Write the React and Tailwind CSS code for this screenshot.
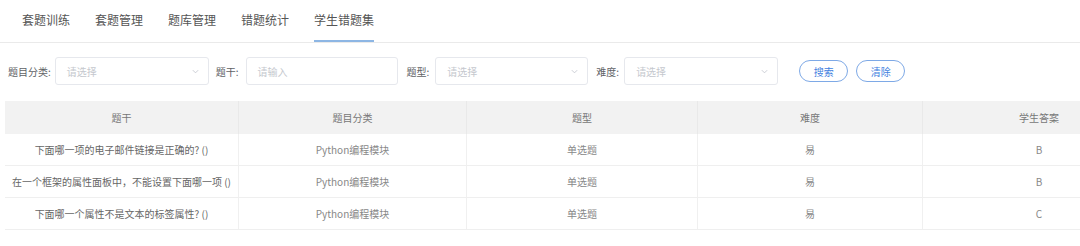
import React from 'react';

const tabs = ['套题训练', '套题管理', '题库管理', '错题统计', '学生错题集'];

const cols = ['题干', '题目分类', '题型', '难度', '学生答案'];

const rows = [
  ['下面哪一项的电子邮件链接是正确的? ()', 'Python编程模块', '单选题', '易', 'B'],
  ['在一个框架的属性面板中，不能设置下面哪一项 ()', 'Python编程模块', '单选题', '易', 'B'],
  ['下面哪一个属性不是文本的标签属性? ()', 'Python编程模块', '单选题', '易', 'C'],
];

const Chevron = () => (
  <svg width="9" height="9" viewBox="0 0 10 10" className="shrink-0">
    <path d="M2 3.5 L5 6.5 L8 3.5" fill="none" stroke="#c0c4cc" strokeWidth="0.9" />
  </svg>
);

const Select = ({ w, placeholder = '请选择', arrow = true }) => (
  <div
    className={`${w} h-[28px] border border-[#e6e8ed] rounded-[3px] bg-white flex items-center justify-between pl-[11px] pr-[8px]`}
  >
    <span className="text-[10px] text-[#c5c8ce]">{placeholder}</span>
    {arrow && <Chevron />}
  </div>
);

const Label = ({ children, className = '' }) => (
  <span className={`text-[10px] text-[#606266] whitespace-nowrap ${className}`}>{children}</span>
);

export default function App() {
  return (
    <div
      className="w-[1080px] h-[246px] overflow-hidden bg-white"
      style={{ fontFamily: '"Noto Sans CJK SC", "Noto Sans", sans-serif' }}
    >
      {/* tabs */}
      <div className="h-[43px] border-b border-[#eaeaea] flex pl-[22px] gap-[25px]">
        {tabs.map((t, i) => (
          <div
            key={t}
            className={`h-[42px] pt-[12px] text-[12px] leading-[16px] text-[#555] ${
              i === 4 ? 'border-b-2 border-[#8db6e4]' : ''
            }`}
          >
            {t}
          </div>
        ))}
      </div>

      {/* filters */}
      <div className="mt-[14px] h-[28px] flex items-center pl-[8px]">
        <Label>题目分类:</Label>
        <div className="ml-[4px]">
          <Select w="w-[154px]" />
        </div>
        <Label className="ml-[7px]">题干:</Label>
        <div className="ml-[7px]">
          <Select w="w-[152px]" placeholder="请输入" arrow={false} />
        </div>
        <Label className="ml-[9px]">题型:</Label>
        <div className="ml-[6px]">
          <Select w="w-[153px]" />
        </div>
        <Label className="ml-[8px]">难度:</Label>
        <div className="ml-[5px]">
          <Select w="w-[154px]" />
        </div>
        <button className="ml-[21px] w-[49px] h-[22px] rounded-full border border-[#7ea9e6] text-[10px] text-[#3f7fe0] bg-white">
          搜索
        </button>
        <button className="ml-[8px] w-[49px] h-[22px] rounded-full border border-[#7ea9e6] text-[10px] text-[#3f7fe0] bg-white">
          清除
        </button>
      </div>

      {/* table */}
      <div className="mt-[16px] ml-[5px] w-[1150px]">
        <div className="grid grid-cols-[234px_228px_231px_225px_232px] h-[33px] bg-[#f2f2f2]">
          {cols.map((c, i) => (
            <div
              key={c}
              className={`flex items-center justify-center text-[10px] text-[#777] ${
                i < 4 ? 'border-r border-[#e9e9e9]' : ''
              }`}
            >
              {c}
            </div>
          ))}
        </div>
        {rows.map((r, ri) => (
          <div
            key={ri}
            className="grid grid-cols-[234px_228px_231px_225px_232px] h-[32px] border-b border-[#efefef]"
          >
            {r.map((v, i) => (
              <div
                key={i}
                className={`flex items-center justify-center text-[10px] whitespace-nowrap ${
                  i === 0 ? 'text-[#666]' : 'text-[#888]'
                } ${i < 4 ? 'border-r border-[#f0f0f0]' : ''}`}
              >
                {v}
              </div>
            ))}
          </div>
        ))}
      </div>
    </div>
  );
}
